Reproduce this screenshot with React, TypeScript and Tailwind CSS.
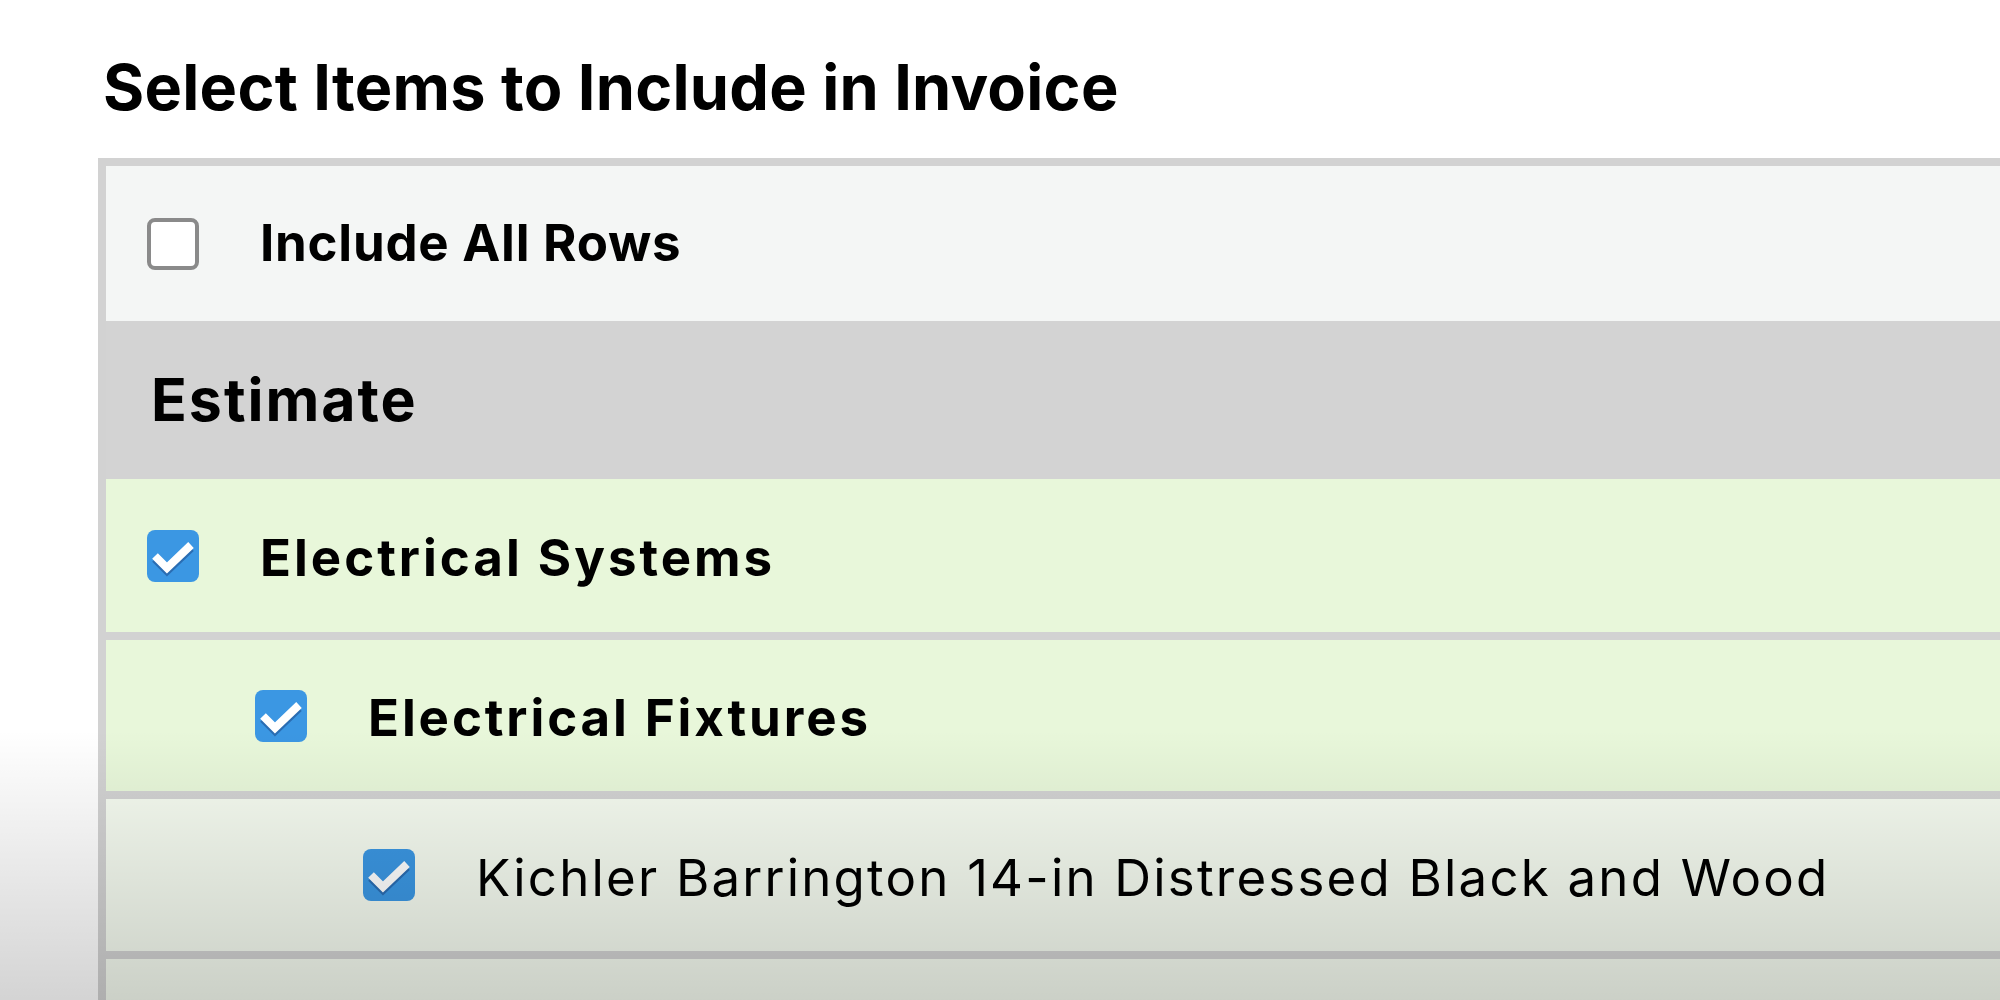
import React from 'react';

type Row = {
  id: string;
  label: string;
  level: number;
  kind: 'group' | 'item';
  checked: boolean;
  height: string;
  tracking: string;
};

const rows: Row[] = [
  { id: 'es', label: 'Electrical Systems', level: 0, kind: 'group', checked: true, height: 'h-[161px]', tracking: 'tracking-[3px]' },
  { id: 'ef', label: 'Electrical Fixtures', level: 1, kind: 'group', checked: true, height: 'h-[159px]', tracking: 'tracking-[2.9px]' },
  {
    id: 'k1',
    label: 'Kichler Barrington 14-in Distressed Black and Wood',
    level: 2,
    kind: 'item',
    checked: true,
    height: 'h-[160px]',
    tracking: 'tracking-[2.2px]',
  },
  { id: 'k2', label: '', level: 2, kind: 'item', checked: false, height: 'h-[200px]', tracking: '' },
];

function Checkbox({ checked }: { checked: boolean }) {
  if (!checked) {
    return (
      <div className="w-[52px] h-[52px] shrink-0 rounded-[8px] border-[4px] border-[#8a8a8a] bg-white" />
    );
  }
  return (
    <div className="w-[52px] h-[52px] shrink-0 rounded-[8px] bg-[#3b97e3]">
      <svg viewBox="0 0 52 52" className="w-[52px] h-[52px]">
        <polyline points="8,29 20,41 44,18" fill="none" stroke="#2a6db3" strokeWidth="8" />
        <polyline points="8,26 20,38 44,15" fill="none" stroke="#ffffff" strokeWidth="8" />
      </svg>
    </div>
  );
}

const pad = ['pl-[41px]', 'pl-[149px]', 'pl-[257px]'];

export default function App() {
  return (
    <div
      className="relative w-[2000px] h-[1000px] overflow-hidden bg-white text-black"
      style={{ fontFamily: 'Inter, "Noto Sans", sans-serif' }}
    >
      <h1 className="ml-[103px] mt-[56px] text-[63px] leading-none font-bold tracking-[0.25px]">
        Select Items to Include in Invoice
      </h1>

      <div className="mt-[39px] ml-[98px] w-[2100px] border-l-8 border-t-8 border-[#d2d2d2]">
        <div className="h-[155px] bg-[#f4f6f5] flex items-center pl-[41px] gap-[61px]">
          <Checkbox checked={false} />
          <span className="text-[51px] font-bold tracking-[0.75px]">Include All Rows</span>
        </div>

        <div className="h-[158px] bg-[#d3d3d3] flex items-center pl-[45px]">
          <span className="text-[59px] font-bold tracking-[2px]">Estimate</span>
        </div>

        {rows.map((r) => (
          <div
            key={r.id}
            className={`${r.height} ${r.kind === 'group' ? 'bg-[#e8f7da]' : 'bg-[#f5fbf0]'} border-b-8 border-[#d2d2d2] flex items-center ${pad[r.level]} gap-[61px]`}
          >
            {r.label && <Checkbox checked={r.checked} />}
            {r.label && (
              <span className={`text-[51px] pt-[6px] ${r.tracking} ${r.kind === 'group' ? 'font-bold' : 'font-normal'}`}>
                {r.label}
              </span>
            )}
          </div>
        ))}
      </div>

      {/* bottom shade over the page */}
      <div className="pointer-events-none absolute inset-x-0 bottom-0 h-[270px] bg-linear-to-b from-transparent to-black/[0.17]" />
    </div>
  );
}
